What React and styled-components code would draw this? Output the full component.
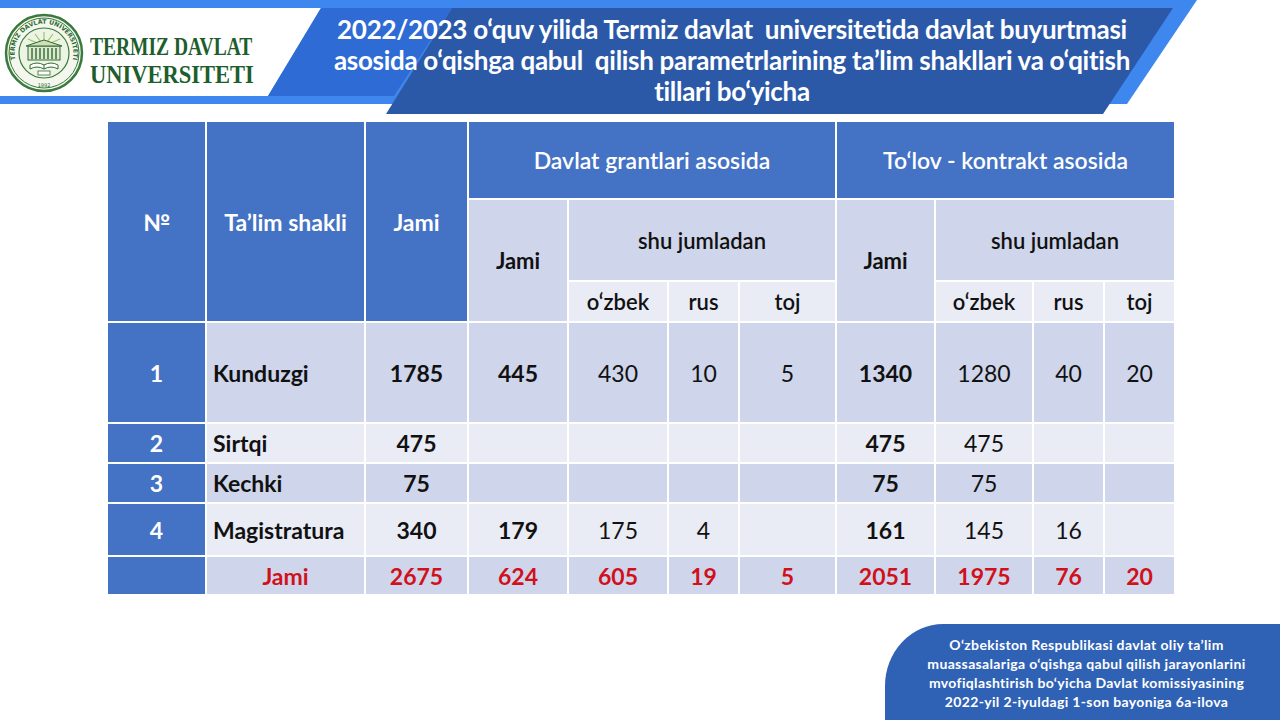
import React from 'react';
import styled, { createGlobalStyle } from 'styled-components';

const GlobalStyle = createGlobalStyle`
  html, body {
    margin: 0;
    padding: 0;
    background: #ffffff;
  }
  body {
    font-family: Lato, 'Open Sans', 'DejaVu Sans', sans-serif;
  }
`;

const BLUE = '#4472c4';
const MID = '#cfd5ea';
const LIGHT = '#e9ebf5';
const RED = '#d0111b';

const Page = styled.div`
  width: 1280px;
  height: 720px;
  display: flex;
  flex-direction: column;
  overflow: hidden;
  background: #fff;
`;

const Header = styled.header`
  position: relative;
  height: 115px;
  display: flex;
  align-items: flex-start;
`;

const Banner = styled.svg`
  position: absolute;
  inset: 0;
  width: 100%;
  height: 100%;
`;

const Brand = styled.div`
  position: relative;
  display: flex;
  align-items: center;
  gap: 6px;
  padding: 12px 0 0 4px;
  width: 296px;
`;

const Wordmark = styled.div`
  display: flex;
  flex-direction: column;
  font-family: 'Liberation Serif', 'Times New Roman', serif;
  font-weight: 700;
  font-size: 25px;
  line-height: 28px;
  color: #1d5e2c;
  padding-top: 16px;
`;

const WordLine = styled.span`
  display: inline-block;
  white-space: nowrap;
  transform: scaleX(${(p) => p.$squeeze});
  transform-origin: left center;
`;

const Title = styled.h1`
  position: relative;
  margin: 0;
  width: 864px;
  padding-top: 14px;
  text-align: center;
  color: #ffffff;
  font-size: 26px;
  font-weight: 700;
  line-height: 31px;
  letter-spacing: -0.3px;
  white-space: nowrap;
`;

const TableWrap = styled.div`
  padding: 5px 0 0 106px;
`;

const Grid = styled.table`
  width: 1068px;
  border-collapse: collapse;
  table-layout: fixed;
`;

const Row = styled.tr`
  height: ${(p) => p.$h}px;
`;

const tones = { blue: BLUE, mid: MID, light: LIGHT };

const HeadCell = styled.th`
  background: ${(p) => tones[p.$tone]};
  color: ${(p) => (p.$tone === 'blue' ? '#ffffff' : '#111111')};
  border: 2px solid #ffffff;
  font-size: ${(p) => (p.$tone === 'blue' ? 23 : 22)}px;
  font-weight: ${(p) => (p.$semi ? 600 : 700)};
  text-align: center;
  vertical-align: middle;
  padding: 0;
  white-space: nowrap;
`;

const NumCell = styled.td`
  background: ${BLUE};
  color: #ffffff;
  border: 2px solid #ffffff;
  font-size: 23px;
  font-weight: 700;
  text-align: center;
  padding: 0;
`;

const Cell = styled.td`
  background: ${(p) => tones[p.$tone]};
  color: ${(p) => (p.$red ? RED : '#111111')};
  border: 2px solid #ffffff;
  font-size: 23px;
  font-weight: ${(p) => (p.$bold ? 700 : 400)};
  text-align: ${(p) => p.$align || 'center'};
  padding: ${(p) => (p.$align === 'left' ? '0 0 0 6px' : '0')};
  white-space: nowrap;
`;

const Note = styled.div`
  margin-top: auto;
  align-self: flex-end;
  width: 395px;
  height: 96px;
  box-sizing: border-box;
  padding: 11px 0 0 8px;
  background: #2f62b5;
  border-top-left-radius: 58px 62px;
  color: #ffffff;
  font-size: 14px;
  font-weight: 700;
  line-height: 19px;
  letter-spacing: 0.35px;
  text-align: center;
  white-space: nowrap;
`;

const Emblem = () => (
  <svg width="80" height="82" viewBox="0 0 80 82">
    <defs>
      <path id="arcTop" d="M 19 62 A 29.5 29.5 0 1 1 61 62" />
    </defs>
    <circle cx="40" cy="41" r="38" fill="#f4f7ee" stroke="#3a7a3c" strokeWidth="2.5" />
    <circle cx="40" cy="41" r="35" fill="none" stroke="#3a7a3c" strokeWidth="1" />
    <circle cx="40" cy="41" r="25" fill="#eef4e4" stroke="#3a7a3c" strokeWidth="1.2" />
    <text fontSize="6.2" fontWeight="700" fill="#2f6b33" fontFamily="'DejaVu Sans', sans-serif">
      <textPath href="#arcTop" startOffset="50%" textAnchor="middle">TERMIZ DAVLAT UNIVERSITETI</textPath>
    </text>
    <text x="40" y="75" fontSize="5" fill="#2f6b33" textAnchor="middle" fontFamily="'DejaVu Sans', sans-serif">1992</text>
    <g stroke="#9cc46a" strokeWidth="1.2">
      <line x1="40" y1="34" x2="40" y2="20" />
      <line x1="40" y1="34" x2="31" y2="22" />
      <line x1="40" y1="34" x2="49" y2="22" />
      <line x1="40" y1="34" x2="24" y2="27" />
      <line x1="40" y1="34" x2="56" y2="27" />
    </g>
    <rect x="24" y="34" width="32" height="14" fill="#dfe9d0" stroke="#2f6b33" strokeWidth="1" />
    <polygon points="22,34 40,28 58,34" fill="#cfe0b8" stroke="#2f6b33" strokeWidth="1" />
    <g stroke="#2f6b33" strokeWidth="1.4">
      <line x1="28" y1="36" x2="28" y2="47" />
      <line x1="32" y1="36" x2="32" y2="47" />
      <line x1="36" y1="36" x2="36" y2="47" />
      <line x1="40" y1="36" x2="40" y2="47" />
      <line x1="44" y1="36" x2="44" y2="47" />
      <line x1="48" y1="36" x2="48" y2="47" />
      <line x1="52" y1="36" x2="52" y2="47" />
    </g>
    <path d="M 26 53 Q 33 49 40 53 Q 47 49 54 53 L 54 57 Q 47 53 40 57 Q 33 53 26 57 Z" fill="#ffffff" stroke="#2f6b33" strokeWidth="1" />
    <line x1="40" y1="53" x2="40" y2="57" stroke="#2f6b33" strokeWidth="1" />
    <rect x="34" y="59" width="12" height="4" fill="#ffffff" stroke="#2f6b33" strokeWidth="0.8" />
  </svg>
);

const rows = [
  { n: '1', name: 'Kunduzgi', jami: '1785', gj: '445', g: ['430', '10', '5'], kj: '1340', k: ['1280', '40', '20'], h: 101, tone: 'mid' },
  { n: '2', name: 'Sirtqi', jami: '475', gj: '', g: ['', '', ''], kj: '475', k: ['475', '', ''], h: 40, tone: 'light' },
  { n: '3', name: 'Kechki', jami: '75', gj: '', g: ['', '', ''], kj: '75', k: ['75', '', ''], h: 40, tone: 'mid' },
  { n: '4', name: 'Magistratura', jami: '340', gj: '179', g: ['175', '4', ''], kj: '161', k: ['145', '16', ''], h: 53, tone: 'light' },
];

const total = { jami: '2675', gj: '624', g: ['605', '19', '5'], kj: '2051', k: ['1975', '76', '20'] };

const widths = [99, 159, 103, 100, 100, 71, 97, 99, 98, 71, 71];
const langs = ['o‘zbek', 'rus', 'toj'];

export default function App() {
  return (
    <Page>
      <GlobalStyle />
      <Header>
        <Banner viewBox="0 0 1280 115" preserveAspectRatio="none">
          <polygon points="0,0 1197,0 1127,104 0,104" fill="#3e87ee" />
          <polygon points="0,8 321,8 268,96 0,96" fill="#ffffff" />
          <polygon points="321,8 452,8 394,96 268,96" fill="#2f6bd4" />
          <polygon points="452,8 1173,8 1103,114 386,114" fill="#2b59a8" />
        </Banner>
        <Brand>
          <Emblem />
          <Wordmark>
            <WordLine $squeeze={0.78}>TERMIZ DAVLAT</WordLine>
            <WordLine $squeeze={0.9}>UNIVERSITETI</WordLine>
          </Wordmark>
        </Brand>
        <Title>
          2022/2023 o‘quv yilida Termiz davlat&nbsp; universitetida davlat buyurtmasi
          <br />
          asosida o‘qishga qabul&nbsp; qilish parametrlarining ta’lim shakllari va o‘qitish
          <br />
          tillari bo‘yicha
        </Title>
      </Header>

      <TableWrap>
        <Grid>
          <colgroup>
            {widths.map((w, i) => (
              <col key={i} style={{ width: w }} />
            ))}
          </colgroup>
          <thead>
            <Row $h={78}>
              <HeadCell $tone="blue" rowSpan={3}>№</HeadCell>
              <HeadCell $tone="blue" rowSpan={3}>Ta’lim shakli</HeadCell>
              <HeadCell $tone="blue" rowSpan={3}>Jami</HeadCell>
              <HeadCell $tone="blue" $semi colSpan={4}>Davlat grantlari asosida</HeadCell>
              <HeadCell $tone="blue" $semi colSpan={4}>To‘lov - kontrakt asosida</HeadCell>
            </Row>
            <Row $h={82}>
              <HeadCell $tone="mid" rowSpan={2}>Jami</HeadCell>
              <HeadCell $tone="mid" $semi colSpan={3}>shu jumladan</HeadCell>
              <HeadCell $tone="mid" rowSpan={2}>Jami</HeadCell>
              <HeadCell $tone="mid" $semi colSpan={3}>shu jumladan</HeadCell>
            </Row>
            <Row $h={41}>
              {[...langs, ...langs].map((l, i) => (
                <HeadCell key={i} $tone="light" $semi>{l}</HeadCell>
              ))}
            </Row>
          </thead>
          <tbody>
            {rows.map((r) => (
              <Row key={r.n} $h={r.h}>
                <NumCell>{r.n}</NumCell>
                <Cell $tone={r.tone} $bold $align="left">{r.name}</Cell>
                <Cell $tone={r.tone} $bold>{r.jami}</Cell>
                <Cell $tone={r.tone} $bold>{r.gj}</Cell>
                {r.g.map((v, i) => (
                  <Cell key={'g' + i} $tone={r.tone}>{v}</Cell>
                ))}
                <Cell $tone={r.tone} $bold>{r.kj}</Cell>
                {r.k.map((v, i) => (
                  <Cell key={'k' + i} $tone={r.tone}>{v}</Cell>
                ))}
              </Row>
            ))}
            <Row $h={39}>
              <NumCell />
              <Cell $tone="mid" $bold $red>Jami</Cell>
              <Cell $tone="mid" $bold $red>{total.jami}</Cell>
              <Cell $tone="mid" $bold $red>{total.gj}</Cell>
              {total.g.map((v, i) => (
                <Cell key={'tg' + i} $tone="mid" $bold $red>{v}</Cell>
              ))}
              <Cell $tone="mid" $bold $red>{total.kj}</Cell>
              {total.k.map((v, i) => (
                <Cell key={'tk' + i} $tone="mid" $bold $red>{v}</Cell>
              ))}
            </Row>
          </tbody>
        </Grid>
      </TableWrap>

      <Note>
        O‘zbekiston Respublikasi davlat oliy ta’lim
        <br />
        muassasalariga o‘qishga qabul qilish jarayonlarini
        <br />
        mvofiqlashtirish bo‘yicha Davlat komissiyasining
        <br />
        2022-yil 2-iyuldagi 1-son bayoniga 6a-ilova
      </Note>
    </Page>
  );
}
